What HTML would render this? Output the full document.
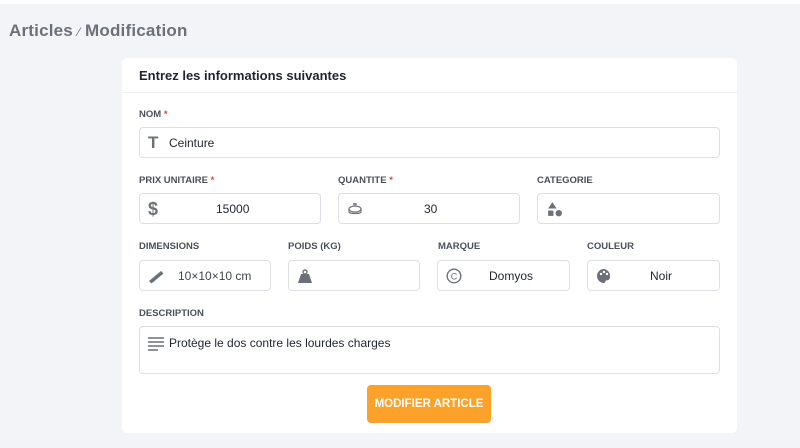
<!DOCTYPE html>
<html><head><meta charset="utf-8"><style>
*{box-sizing:border-box;margin:0;padding:0}
body{width:800px;height:448px;background:#f3f4f8;font-family:"Liberation Sans",sans-serif;position:relative;overflow:hidden}
.top{position:absolute;left:0;top:0;width:800px;height:4px;background:#fff}
h1{position:absolute;left:9px;top:21px;font-size:17px;font-weight:bold;color:#6b7079;letter-spacing:0.2px}
.card{position:absolute;left:122px;top:58px;width:615px;height:375px;background:#fff;border-radius:5px}
.hd{height:35px;border-bottom:1px solid #eef0f3;padding:10px 17px;font-size:13px;font-weight:bold;color:#1f2430}
.l{position:absolute;font-size:9.5px;font-weight:bold;color:#4a505a}
.l b{color:#e0453c}
.i{position:absolute;border:1px solid #dcdfe4;border-radius:4px;height:31px;font-size:12px;color:#1f2430;display:flex;align-items:center}
.ic{position:absolute;left:8px;top:7px;width:16px;height:16px;color:#6b7079}
.v{position:absolute;top:8px}
.btn{position:absolute;left:245px;top:327px;width:124px;height:38px;background:#fca22b;border-radius:4px;color:#fff;font-weight:bold;font-size:11.5px;text-align:center;line-height:38px}
</style></head><body>
<div class="top"></div>
<h1>Articles <span style="font-weight:normal;font-size:12px">⁄</span> Modification</h1>
<div class="card">
<div class="hd">Entrez les informations suivantes</div>
<div class="l" style="left:17px;top:51px">NOM <b>*</b></div>
<div class="i" style="left:17px;top:69px;width:581px"><span class="ic" style="font-size:17px;font-weight:bold;top:5px">T</span><span class="v" style="left:29px">Ceinture</span></div>

<div class="l" style="left:17px;top:117px">PRIX UNITAIRE <b>*</b></div>
<div class="i" style="left:17px;top:135px;width:182px"><span class="ic" style="font-size:18px;font-weight:bold;top:5px">$</span><span class="v" style="left:76px">15000</span></div>
<div class="l" style="left:216px;top:117px">QUANTITE <b>*</b></div>
<div class="i" style="left:216px;top:135px;width:182px"><svg class="ic" viewBox="0 0 16 16"><g fill="none" stroke="#6b7079" stroke-width="1.2"><ellipse cx="8" cy="8" rx="6" ry="3"/><path d="M2 8v3c0 2 12 2 12 0V8M8 2v3M6 3h4"/></g></svg><span class="v" style="left:85px">30</span></div>
<div class="l" style="left:415px;top:117px">CATEGORIE</div>
<div class="i" style="left:415px;top:135px;width:183px"><svg class="ic" viewBox="0 0 16 16" style="top:7px;width:17px;height:17px"><path d="M6 1l4 6H2z" fill="#6b7079"/><rect x="2" y="9" width="5" height="5" fill="#6b7079"/><circle cx="12" cy="11.5" r="3" fill="#6b7079"/></svg></div>

<div class="l" style="left:17px;top:183px">DIMENSIONS</div>
<div class="i" style="left:17px;top:202px;width:132px"><svg class="ic" viewBox="0 0 16 16"><path d="M1 13L13 3l2.5 2.5L3.5 15.5z" fill="#6b7079"/></svg><span class="v" style="left:38px;color:#3f4550">10×10×10 cm</span></div>
<div class="l" style="left:166px;top:183px">POIDS (KG)</div>
<div class="i" style="left:166px;top:202px;width:132px"><svg class="ic" viewBox="0 0 16 16"><circle cx="8" cy="4" r="2" fill="none" stroke="#6b7079" stroke-width="1.4"/><path d="M4 6h8l3 9H1z" fill="#6b7079"/></svg></div>
<div class="l" style="left:316px;top:183px">MARQUE</div>
<div class="i" style="left:315px;top:202px;width:133px"><svg class="ic" viewBox="0 0 16 16"><circle cx="8" cy="8" r="6.8" fill="none" stroke="#6b7079" stroke-width="1.4"/><text x="8" y="11.5" font-size="9" text-anchor="middle" fill="#6b7079" font-family="Liberation Sans">C</text></svg><span class="v" style="left:51px">Domyos</span></div>
<div class="l" style="left:465px;top:183px">COULEUR</div>
<div class="i" style="left:465px;top:202px;width:133px"><svg class="ic" viewBox="0 0 16 16"><path d="M8 1a7 7 0 100 14c1.5 0 1-2 2-2.5s4 .5 4-4A7 7 0 008 1z" fill="#6b7079"/><circle cx="5" cy="6" r="1.2" fill="#fff"/><circle cx="8" cy="4" r="1.2" fill="#fff"/><circle cx="11" cy="6" r="1.2" fill="#fff"/></svg><span class="v" style="left:62px">Noir</span></div>

<div class="l" style="left:17px;top:250px">DESCRIPTION</div>
<div class="i" style="left:17px;top:268px;width:581px;height:48px;align-items:flex-start"><svg class="ic" viewBox="0 0 16 16" style="top:9px"><path d="M0 2h16M0 6h16M0 10h16M0 14h10" stroke="#6b7079" stroke-width="1.5"/></svg><span class="v" style="left:29px;top:9px">Protège le dos contre les lourdes charges</span></div>
<div class="btn">MODIFIER ARTICLE</div>
</div>
</body></html>
